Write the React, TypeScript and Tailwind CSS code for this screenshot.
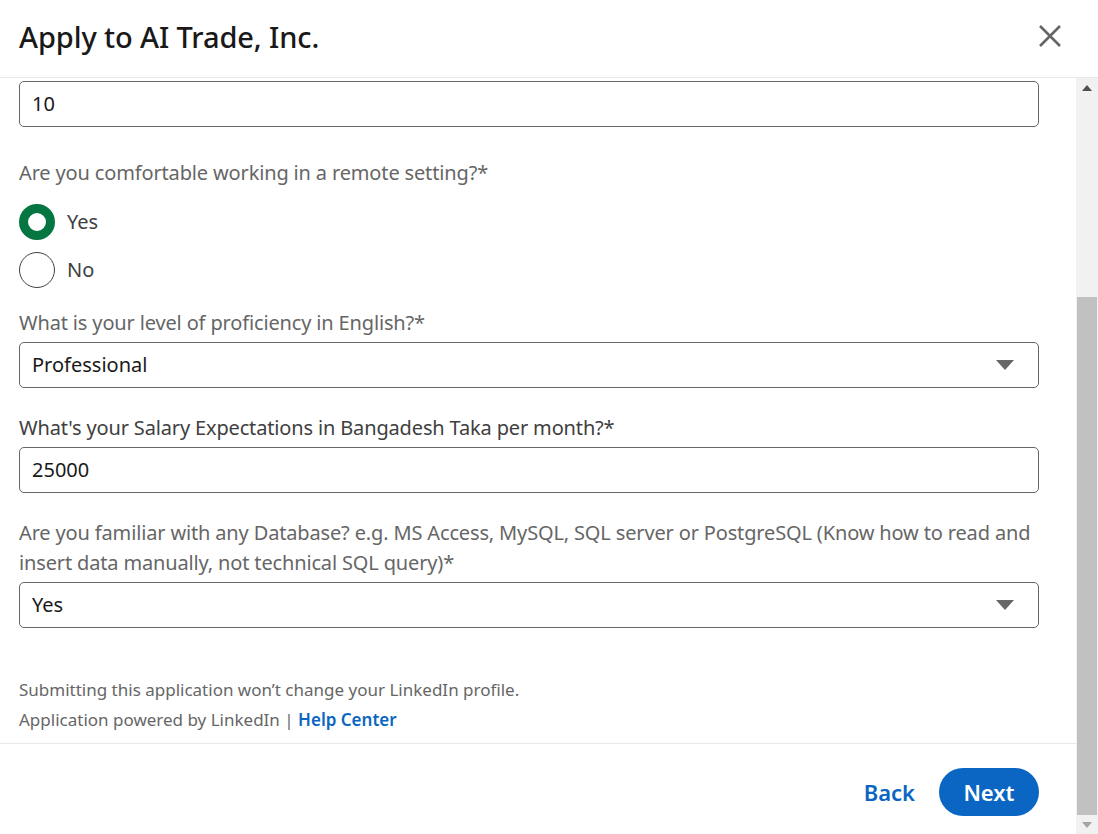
import React from "react";

const font = { fontFamily: '"Noto Sans", "Open Sans", Arial, sans-serif' };

function Caret() {
  return (
    <svg width="20" height="10" viewBox="0 0 20 10" className="shrink-0">
      <path d="M1 0 L19 0 L10 10 Z" fill="#666666" />
    </svg>
  );
}

export default function App() {
  return (
    <div className="w-[1098px] h-[834px] bg-white flex flex-col overflow-hidden" style={font}>
      {/* Header */}
      <div className="h-[78px] shrink-0 flex items-center justify-between pl-[19px] pr-[36px] pb-[5px] border-b border-[#e8e8e8]">
        <h1 className="text-[29px] leading-none text-[#191919] font-medium tracking-[-0.1px]">Apply to AI Trade, Inc.</h1>
        <svg width="24" height="24" viewBox="0 0 24 24">
          <path d="M2 2 L22 22 M22 2 L2 22" stroke="#666666" strokeWidth="2.6" strokeLinecap="butt" />
        </svg>
      </div>

      <div className="flex flex-1 min-h-0">
        {/* Content */}
        <div className="flex-1 flex flex-col">
          <div className="pl-[19px] pr-[37px] flex flex-col">
            <div className="mt-[3px] h-[46px] rounded-[5px] border border-[#666666] flex items-center px-[12px] text-[20px] text-[#191919]">10</div>

            <div className="mt-[31px] text-[20px] leading-[30px] tracking-[-0.15px] text-[#666666]">Are you comfortable working in a remote setting?*</div>
            <div className="mt-[10px] h-[48px] flex items-center gap-[12px]">
              <span className="w-[36px] h-[36px] rounded-full border-[9px] border-[#057642] bg-white shrink-0" />
              <span className="text-[20px] text-[#404040]">Yes</span>
            </div>
            <div className="h-[48px] flex items-center gap-[12px]">
              <span className="w-[36px] h-[36px] rounded-full border-[1.5px] border-[#404040] bg-white shrink-0" />
              <span className="text-[20px] text-[#404040]">No</span>
            </div>

            <div className="mt-[14px] text-[20px] leading-[30px] tracking-[-0.15px] text-[#666666]">What is your level of proficiency in English?*</div>
            <div className="mt-[4px] h-[46px] rounded-[5px] border border-[#666666] flex items-center justify-between pl-[12px] pr-[23px] text-[20px] text-[#191919]">
              <span>Professional</span>
              <Caret />
            </div>

            <div className="mt-[25px] text-[20px] leading-[30px] tracking-[-0.15px] text-[#404040]">What's your Salary Expectations in Bangadesh Taka per month?*</div>
            <div className="mt-[4px] h-[46px] rounded-[5px] border border-[#666666] flex items-center px-[12px] text-[20px] text-[#191919]">25000</div>

            <div className="mt-[25px] text-[20px] leading-[30px] tracking-[-0.15px] text-[#666666]">
              Are you familiar with any Database? e.g. MS Access, MySQL, SQL server or PostgreSQL (Know how to read and insert data manually, not technical SQL query)*
            </div>
            <div className="mt-[4px] h-[46px] rounded-[5px] border border-[#666666] flex items-center justify-between pl-[12px] pr-[23px] text-[20px] text-[#191919]">
              <span>Yes</span>
              <Caret />
            </div>

            <div className="mt-[47px] text-[17px] leading-[30px] text-[#666666]">Submitting this application won’t change your LinkedIn profile.</div>
            <div className="text-[17px] leading-[30px] text-[#666666]">
              Application powered by LinkedIn | <span className="text-[#0a66c2] font-semibold">Help Center</span>
            </div>
          </div>

          <div className="mt-[8px] border-t border-[#e8e8e8]" />
          <div className="pt-[24px] pr-[37px] flex justify-end items-center gap-[24px]">
            <span className="text-[22px] font-semibold text-[#0a66c2]">Back</span>
            <span className="h-[48px] w-[100px] rounded-full bg-[#0a66c2] text-white text-[22px] font-semibold flex items-center justify-center">Next</span>
          </div>
        </div>

        {/* Scrollbar */}
        <div className="w-[22px] shrink-0 bg-[#f1f1f1] flex flex-col items-center">
          <div className="h-[20px] w-full flex items-center justify-center shrink-0">
            <svg width="10" height="6" viewBox="0 0 10 6"><path d="M0 6 L10 6 L5 0 Z" fill="#505050" /></svg>
          </div>
          <div className="h-[199px] shrink-0" />
          <div className="w-[20px] h-[518px] bg-[#c1c1c1] shrink-0" />
          <div className="flex-1 w-full flex items-center justify-center">
            <svg width="10" height="6" viewBox="0 0 10 6"><path d="M0 0 L10 0 L5 6 Z" fill="#a3a3a3" /></svg>
          </div>
        </div>
      </div>
    </div>
  );
}
